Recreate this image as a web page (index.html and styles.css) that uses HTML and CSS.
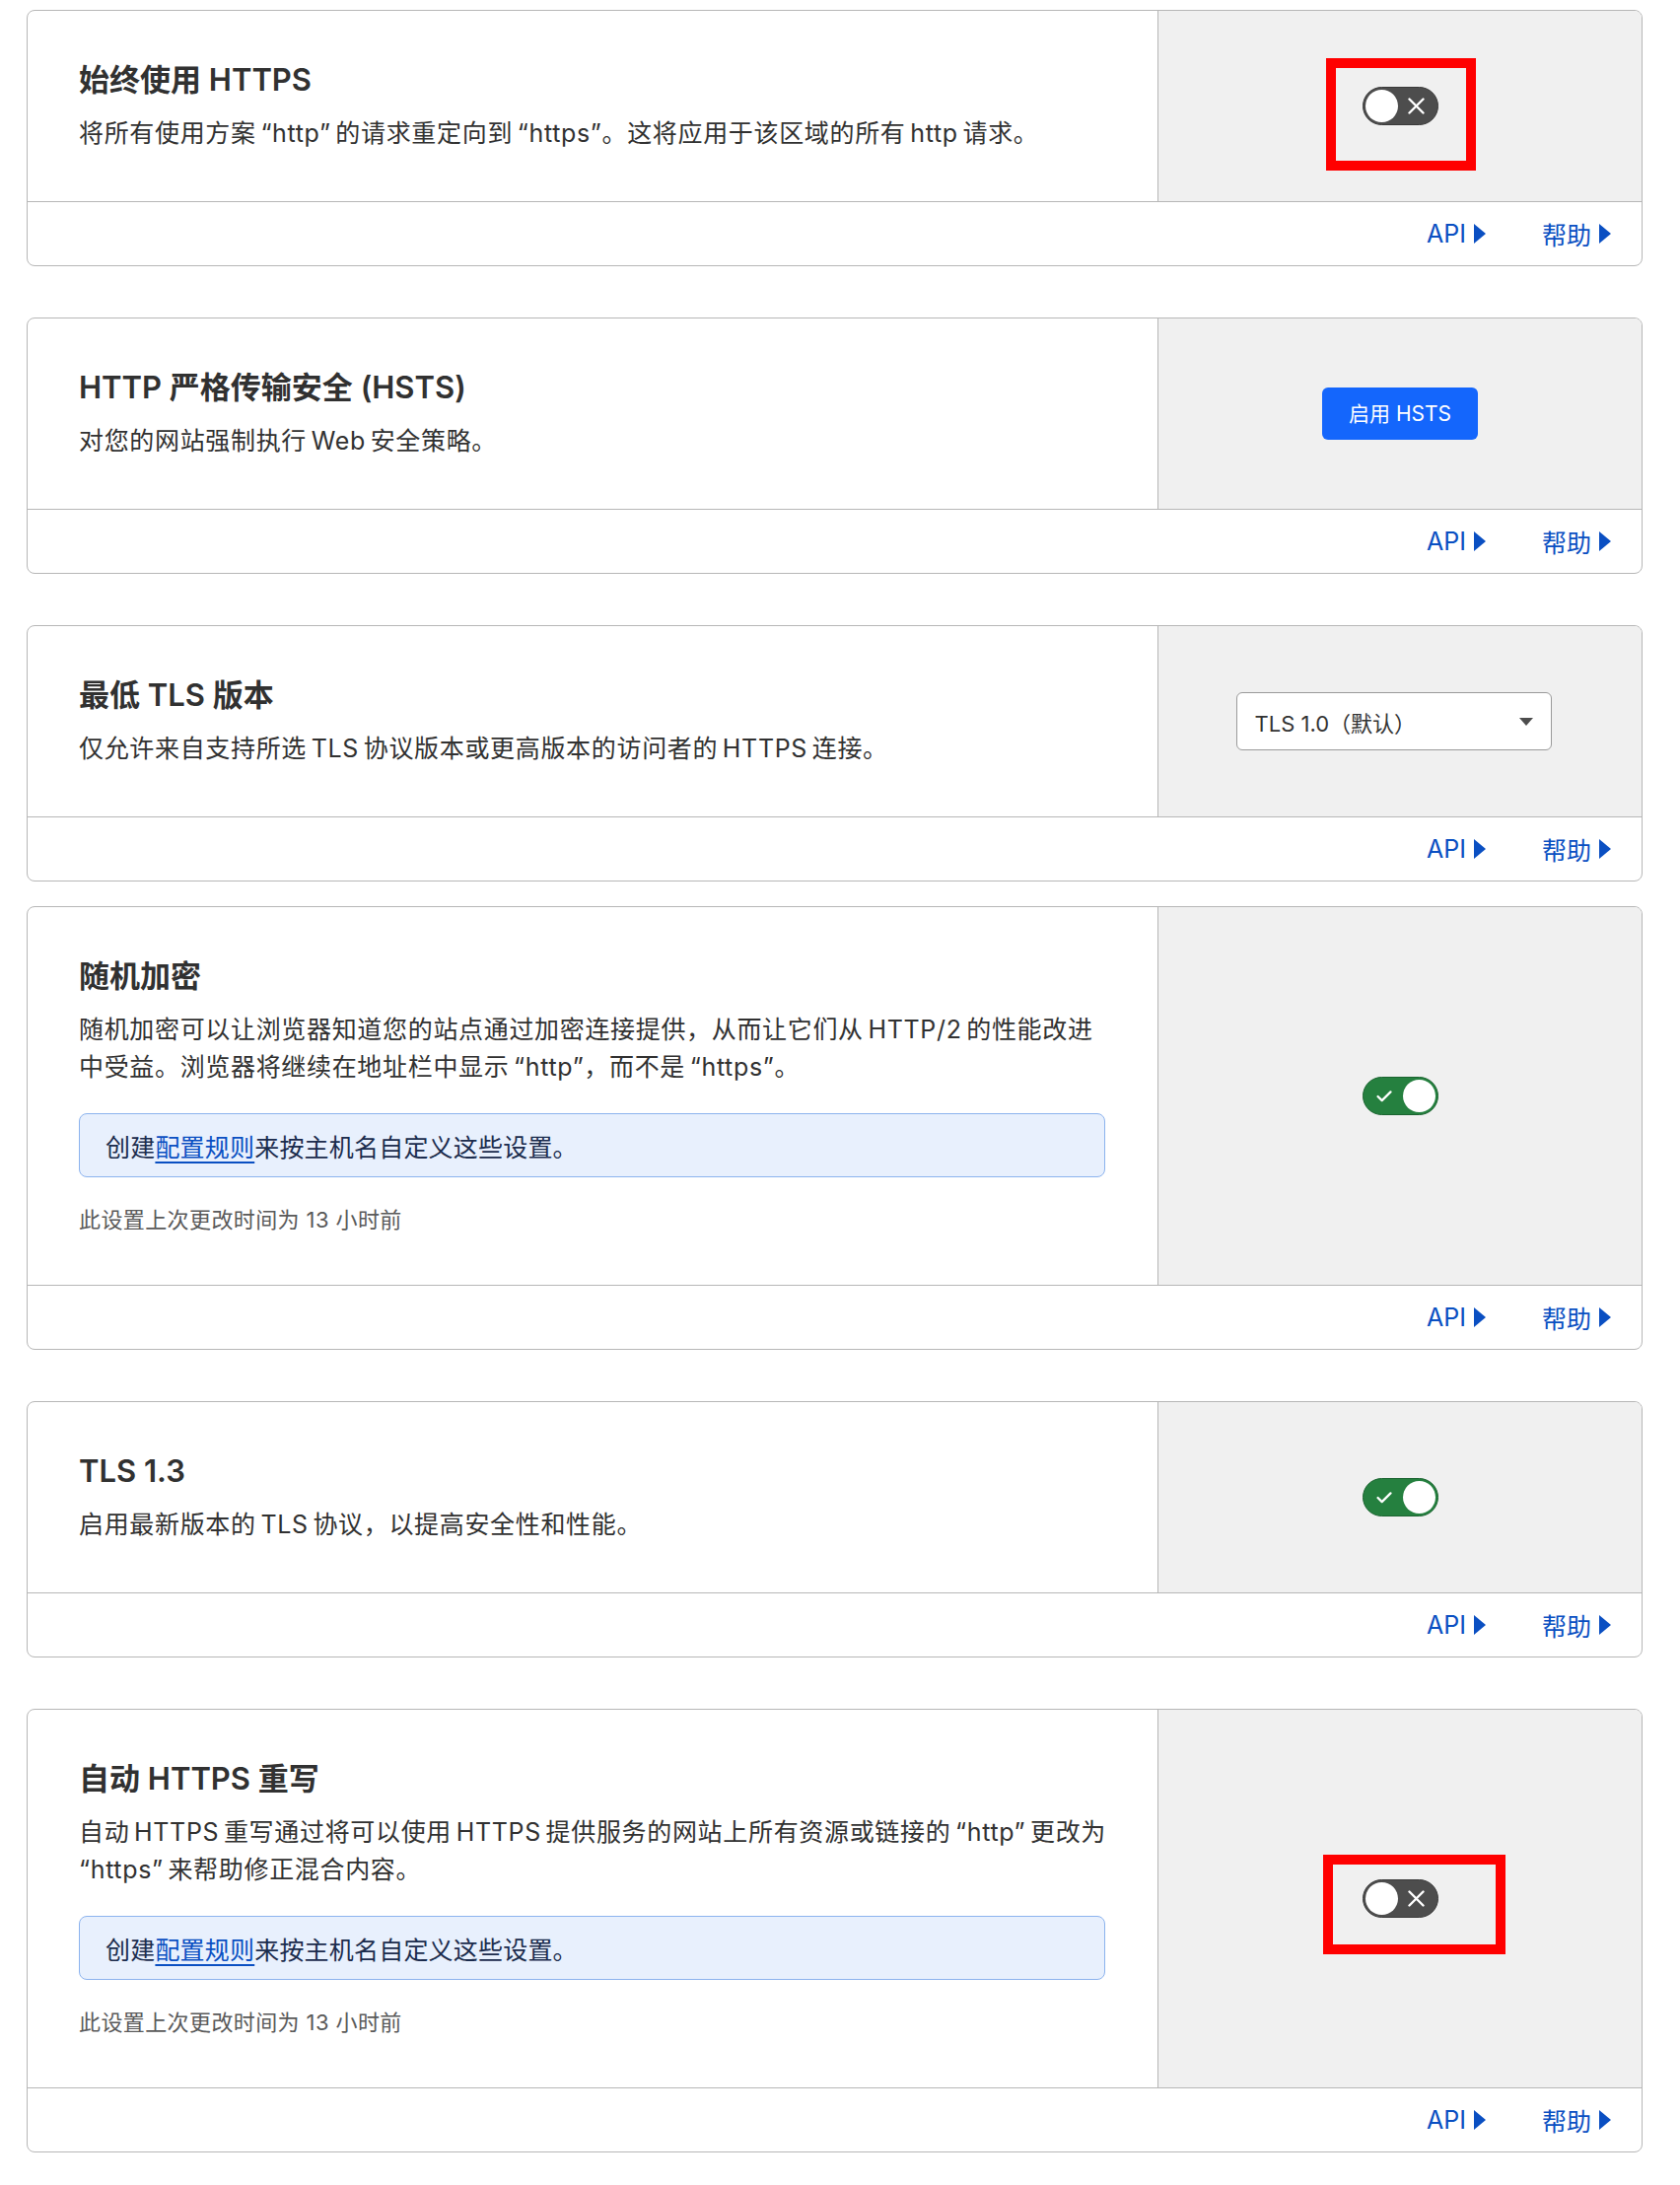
FILE: index.html
```html
<!DOCTYPE html>
<html lang="zh-CN">
<head>
<meta charset="utf-8">
<title>SSL/TLS 边缘证书设置</title>
<link rel="stylesheet" href="styles.css">
</head>
<body>
<main class="page">

  <section class="card">
    <div class="card-body">
      <div class="card-main">
        <h2 class="card-title">始终使用 HTTPS</h2>
        <p class="card-desc">将所有使用方案 “http” 的请求重定向到 “https”。这将应用于该区域的所有 http 请求。</p>
      </div>
      <div class="card-control">
        <span class="toggle toggle-off" role="switch" aria-checked="false">
          <span class="toggle-knob"></span>
          <span class="toggle-mark">
            <svg class="icon-x" viewBox="0 0 17 17" width="17" height="17"><path d="M1.5 1.5 L15.5 15.5 M15.5 1.5 L1.5 15.5" /></svg>
          </span>
        </span>
        <span class="highlight highlight-first"></span>
      </div>
    </div>
    <div class="card-footer">
      <a class="footer-link" href="#">API</a>
      <a class="footer-link" href="#">帮助</a>
    </div>
  </section>

  <section class="card">
    <div class="card-body">
      <div class="card-main">
        <h2 class="card-title">HTTP 严格传输安全 (HSTS)</h2>
        <p class="card-desc">对您的网站强制执行 Web 安全策略。</p>
      </div>
      <div class="card-control">
        <button class="btn-primary" type="button">启用 HSTS</button>
      </div>
    </div>
    <div class="card-footer">
      <a class="footer-link" href="#">API</a>
      <a class="footer-link" href="#">帮助</a>
    </div>
  </section>

  <section class="card card-tight">
    <div class="card-body">
      <div class="card-main">
        <h2 class="card-title">最低 TLS 版本</h2>
        <p class="card-desc">仅允许来自支持所选 TLS 协议版本或更高版本的访问者的 HTTPS 连接。</p>
      </div>
      <div class="card-control">
        <div class="select">
          <span class="select-value">TLS 1.0（默认）</span>
          <span class="select-arrow"></span>
        </div>
      </div>
    </div>
    <div class="card-footer">
      <a class="footer-link" href="#">API</a>
      <a class="footer-link" href="#">帮助</a>
    </div>
  </section>

  <section class="card">
    <div class="card-body">
      <div class="card-main">
        <h2 class="card-title">随机加密</h2>
        <p class="card-desc">随机加密可以让浏览器知道您的站点通过加密连接提供，从而让它们从 HTTP/2 的性能改进中受益。浏览器将继续在地址栏中显示 “http”，而不是 “https”。</p>
        <div class="notice">创建<a class="notice-link" href="#">配置规则</a>来按主机名自定义这些设置。</div>
        <p class="card-meta">此设置上次更改时间为 13 小时前</p>
      </div>
      <div class="card-control">
        <span class="toggle toggle-on" role="switch" aria-checked="true">
          <span class="toggle-mark">
            <svg class="icon-check" viewBox="0 0 17 13" width="17" height="13"><path d="M1.5 6.5 L6 11 L15.5 1.5" /></svg>
          </span>
          <span class="toggle-knob"></span>
        </span>
      </div>
    </div>
    <div class="card-footer">
      <a class="footer-link" href="#">API</a>
      <a class="footer-link" href="#">帮助</a>
    </div>
  </section>

  <section class="card">
    <div class="card-body">
      <div class="card-main">
        <h2 class="card-title">TLS 1.3</h2>
        <p class="card-desc">启用最新版本的 TLS 协议，以提高安全性和性能。</p>
      </div>
      <div class="card-control">
        <span class="toggle toggle-on" role="switch" aria-checked="true">
          <span class="toggle-mark">
            <svg class="icon-check" viewBox="0 0 17 13" width="17" height="13"><path d="M1.5 6.5 L6 11 L15.5 1.5" /></svg>
          </span>
          <span class="toggle-knob"></span>
        </span>
      </div>
    </div>
    <div class="card-footer">
      <a class="footer-link" href="#">API</a>
      <a class="footer-link" href="#">帮助</a>
    </div>
  </section>

  <section class="card">
    <div class="card-body">
      <div class="card-main">
        <h2 class="card-title">自动 HTTPS 重写</h2>
        <p class="card-desc">自动 HTTPS 重写通过将可以使用 HTTPS 提供服务的网站上所有资源或链接的 “http” 更改为 “https” 来帮助修正混合内容。</p>
        <div class="notice">创建<a class="notice-link" href="#">配置规则</a>来按主机名自定义这些设置。</div>
        <p class="card-meta">此设置上次更改时间为 13 小时前</p>
      </div>
      <div class="card-control">
        <span class="toggle toggle-off" role="switch" aria-checked="false">
          <span class="toggle-knob"></span>
          <span class="toggle-mark">
            <svg class="icon-x" viewBox="0 0 17 17" width="17" height="17"><path d="M1.5 1.5 L15.5 15.5 M15.5 1.5 L1.5 15.5" /></svg>
          </span>
        </span>
        <span class="highlight highlight-last"></span>
      </div>
    </div>
    <div class="card-footer">
      <a class="footer-link" href="#">API</a>
      <a class="footer-link" href="#">帮助</a>
    </div>
  </section>

</main>
</body>
</html>
```

FILE: styles.css
```css
* {
  box-sizing: border-box;
}

body {
  margin: 0;
  background: #ffffff;
  font-family: Inter, "Noto Sans CJK SC", sans-serif;
  color: #313131;
}

.page {
  display: flex;
  flex-direction: column;
  padding: 10px 38px 0 27px;
}

.card {
  border: 1px solid #b7b7b7;
  border-radius: 8px;
  overflow: hidden;
  background: #ffffff;
  margin-bottom: 52px;
}

.card-tight {
  margin-bottom: 25px;
}

.card-body {
  display: flex;
}

.card-main {
  flex: 1;
  min-width: 0;
  padding: 50px 47px 50px 52px;
}

.card-title {
  margin: 0;
  font-size: 31px;
  line-height: 40px;
  font-weight: 600;
  color: #313131;
}

.card-desc {
  margin: 15px 0 0;
  font-size: 25px;
  line-height: 38px;
  letter-spacing: 0.67px;
  word-spacing: -3px;
  color: #313131;
}

.notice {
  margin-top: 28px;
  margin-right: 6px;
  height: 65px;
  display: flex;
  align-items: center;
  padding: 0 26px;
  border: 1px solid #8cb3ee;
  border-radius: 8px;
  background: #e8f0fd;
  font-size: 25px;
  letter-spacing: 0.2px;
  color: #1b2c4d;
}

.notice-link {
  color: #0a4fc2;
  text-decoration: underline;
  text-decoration-thickness: 2px;
  text-underline-offset: 5px;
}

.card-meta {
  margin: 27px 0 0;
  font-size: 22px;
  line-height: 32px;
  letter-spacing: 0.4px;
  color: #5a5a5a;
}

.card-control {
  position: relative;
  width: 491px;
  flex: none;
  display: flex;
  align-items: center;
  justify-content: center;
  border-left: 1px solid #b7b7b7;
  background: #f0f0f0;
}

/* toggle switch */
.toggle {
  display: flex;
  align-items: center;
  width: 77px;
  height: 39px;
  padding: 0 2px;
  border-radius: 20px;
  border: 1px solid transparent;
}

.toggle-off {
  background: #4d4d4d;
  border-color: #3b3b3b;
}

.toggle-on {
  background: #25803f;
  border-color: #1b6430;
}

.toggle-knob {
  flex: none;
  width: 33px;
  height: 33px;
  border-radius: 50%;
  background: #ffffff;
}

.toggle-mark {
  flex: 1;
  display: flex;
  align-items: center;
  justify-content: center;
}

.icon-x,
.icon-check {
  fill: none;
  stroke: #ffffff;
  stroke-width: 2.4;
  stroke-linecap: round;
  stroke-linejoin: round;
}

.icon-check {
  width: 16px;
  height: 12px;
}

/* annotation boxes */
.highlight {
  position: absolute;
  border: 10px solid #ff0000;
}

.highlight-first {
  left: 170px;
  top: 48px;
  width: 152px;
  height: 114px;
}

.highlight-last {
  left: 167px;
  top: 147px;
  width: 185px;
  height: 101px;
}

/* HSTS button */
.btn-primary {
  height: 53px;
  padding: 0 27px;
  border: 0;
  border-radius: 6px;
  background: #1466fc;
  color: #ffffff;
  font-family: Inter, "Noto Sans CJK SC", sans-serif;
  font-size: 21px;
  line-height: 53px;
  cursor: pointer;
}

/* select */
.select {
  width: 320px;
  height: 59px;
  margin-right: 13px;
  display: flex;
  align-items: center;
  justify-content: space-between;
  padding: 0 18px;
  border: 1px solid #9a9a9a;
  border-radius: 6px;
  background: #ffffff;
  font-size: 22px;
  color: #333333;
}

.select-arrow {
  width: 0;
  height: 0;
  border-top: 8px solid #4d4d4d;
  border-left: 7px solid transparent;
  border-right: 7px solid transparent;
}

/* footer */
.card-footer {
  height: 65px;
  display: flex;
  align-items: center;
  justify-content: flex-end;
  gap: 57px;
  padding-right: 31px;
  border-top: 1px solid #b7b7b7;
}

.footer-link {
  display: inline-flex;
  align-items: center;
  gap: 8px;
  font-size: 25px;
  color: #0a4fc2;
  text-decoration: none;
}

.footer-link::after {
  content: "";
  width: 0;
  height: 0;
  border-left: 12px solid currentColor;
  border-top: 10px solid transparent;
  border-bottom: 10px solid transparent;
}
```
